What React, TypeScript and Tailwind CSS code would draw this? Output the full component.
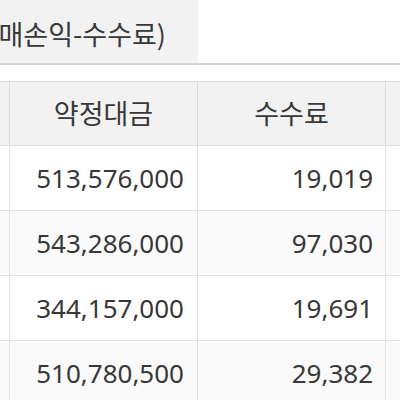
import React from "react";

const rows = [
  { amount: "513,576,000", fee: "19,019" },
  { amount: "543,286,000", fee: "97,030" },
  { amount: "344,157,000", fee: "19,691" },
  { amount: "510,780,500", fee: "29,382" },
];

export default function App() {
  return (
    <div className="w-[400px] h-[400px] overflow-hidden bg-white text-[#383838] font-['Noto_Sans','Noto_Sans_CJK_KR',sans-serif]">
      {/* summary line */}
      <div className="flex h-[65px] border-b-2 border-[#d6d6d6]">
        <div className="w-[197px] bg-[#f2f2f2] flex items-center justify-end overflow-hidden pr-[31px] pt-[5px]">
          <span className="whitespace-nowrap text-[27px] font-['Noto_Sans_CJK_KR',sans-serif]">(실현손익=매매손익-수수료)</span>
        </div>
        <div className="flex-1 bg-white border-l border-[#f0f0f0]"></div>
      </div>

      <div className="h-[16px]"></div>

      {/* table */}
      <div className="grid grid-cols-[9px_188px_188px_1fr] border-t border-[#dcdcdc]">
        <div className="h-[64px] bg-[#f2f2f2] border-b border-[#dcdcdc]"></div>
        <div className="h-[64px] bg-[#f2f2f2] border-l border-b border-[#dcdcdc] flex items-center justify-center text-[27px] font-['Noto_Sans_CJK_KR',sans-serif]">
          약정대금
        </div>
        <div className="h-[64px] bg-[#f2f2f2] border-l border-b border-[#dcdcdc] flex items-center justify-center text-[27px] font-['Noto_Sans_CJK_KR',sans-serif]">
          수수료
        </div>
        <div className="h-[64px] bg-[#f2f2f2] border-l border-b border-[#dcdcdc]"></div>

        {rows.map((r, i) => (
          <React.Fragment key={i}>
            <div className={`h-[65px] border-b border-[#e2e2e2] ${i % 2 ? "bg-[#fafafa]" : "bg-white"}`}></div>
            <div className={`h-[65px] border-l border-b border-[#e2e2e2] flex items-center justify-end pr-[13px] text-[26px] ${i % 2 ? "bg-[#fafafa]" : "bg-white"}`}>
              {r.amount}
            </div>
            <div className={`h-[65px] border-l border-b border-[#e2e2e2] flex items-center justify-end pr-[12px] text-[26px] ${i % 2 ? "bg-[#fafafa]" : "bg-white"}`}>
              {r.fee}
            </div>
            <div className={`h-[65px] border-l border-b border-[#e2e2e2] ${i % 2 ? "bg-[#fafafa]" : "bg-white"}`}></div>
          </React.Fragment>
        ))}
      </div>
    </div>
  );
}
